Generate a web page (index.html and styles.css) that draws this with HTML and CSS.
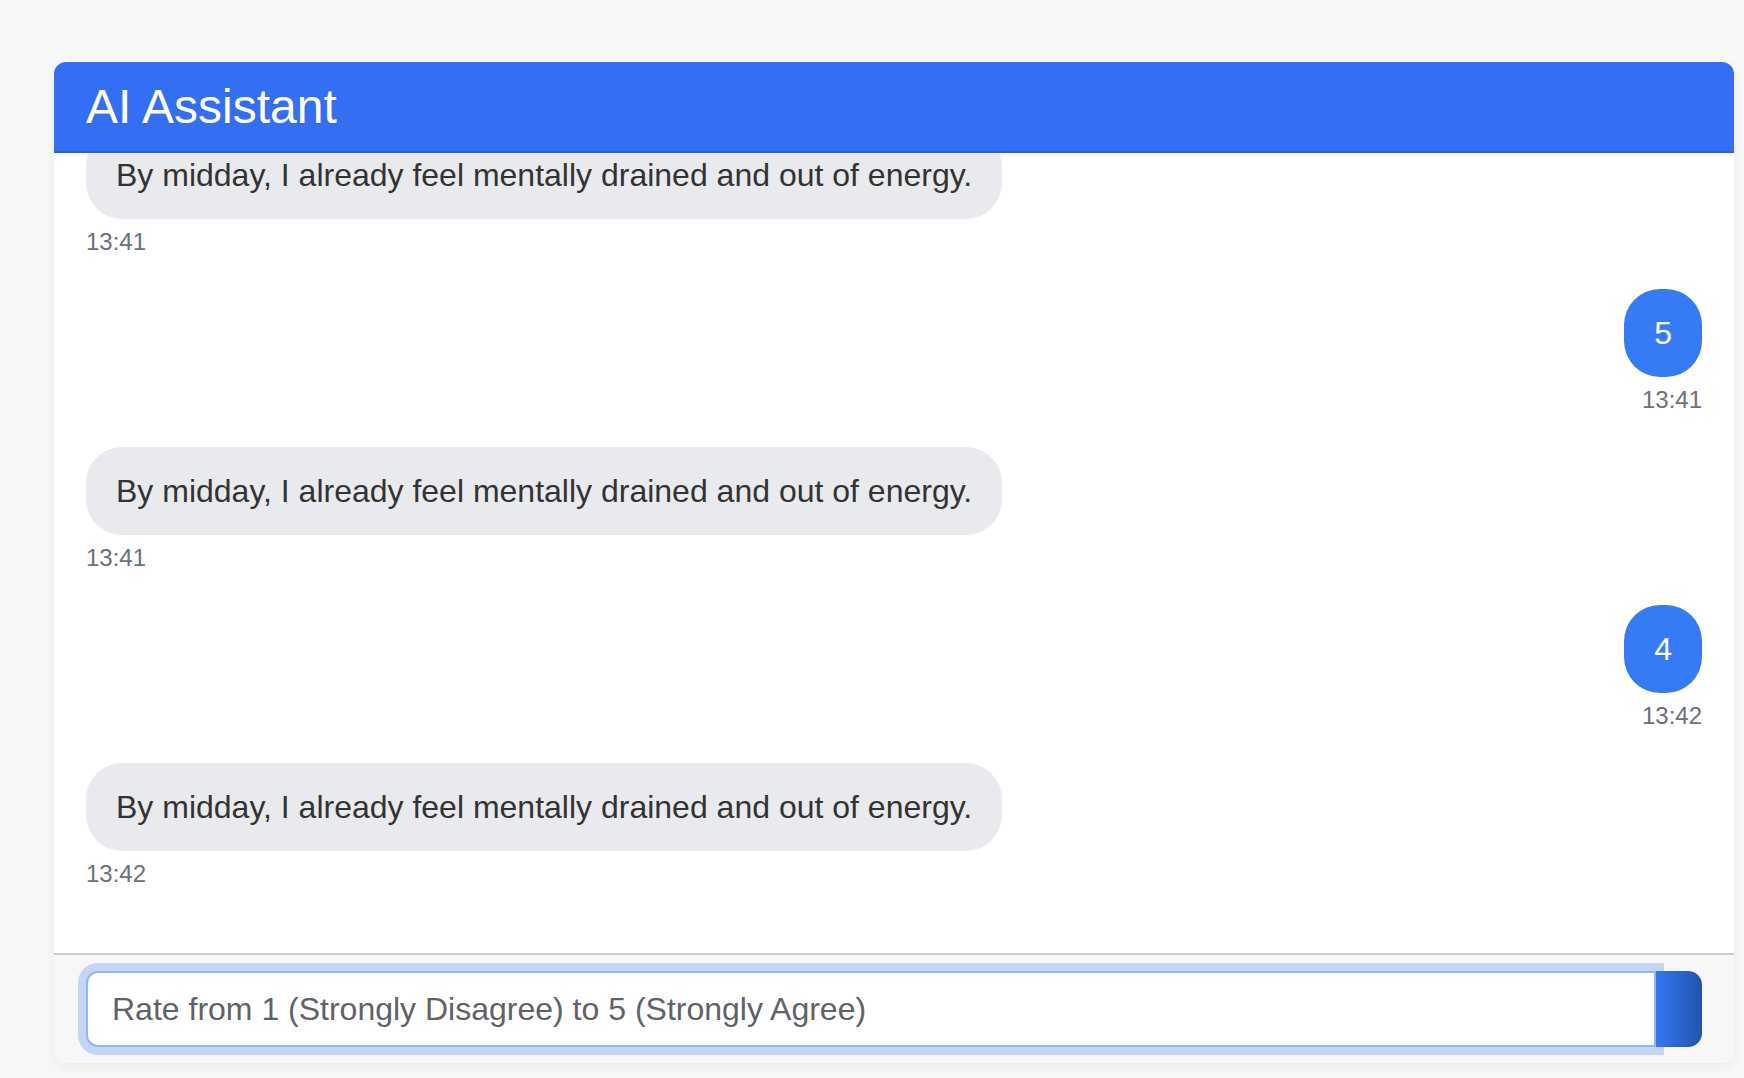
FILE: index.html
```html
<!DOCTYPE html>
<html>
<head>
    <title>AI Assistant</title>
    <link rel="stylesheet" href="styles.css">
</head>
<body>
    <div class="chat">
        <div class="chat-header">
            <h1>AI Assistant</h1>
        </div>
        <div class="chat-messages" id="messages">
            <div class="message bot">
                <div class="bubble">By midday, I already feel mentally drained and out of energy.</div>
                <div class="time">13:41</div>
            </div>
            <div class="message user">
                <div class="bubble">5</div>
                <div class="time">13:41</div>
            </div>
            <div class="message bot">
                <div class="bubble">By midday, I already feel mentally drained and out of energy.</div>
                <div class="time">13:41</div>
            </div>
            <div class="message user">
                <div class="bubble">4</div>
                <div class="time">13:42</div>
            </div>
            <div class="message bot">
                <div class="bubble">By midday, I already feel mentally drained and out of energy.</div>
                <div class="time">13:42</div>
            </div>
        </div>
        <div class="chat-input">
            <input type="text" id="answer" placeholder="Rate from 1 (Strongly Disagree) to 5 (Strongly Agree)">
            <button class="send"></button>
        </div>
    </div>
    <script>
        const messages = document.getElementById("messages");
        messages.scrollTop = messages.scrollHeight;
    </script>
</body>
</html>
```

FILE: styles.css
```css
body {
    margin: 0;
    padding: 62px 10px 15px 54px;
    background: #f7f8fa;
    font-family: "Liberation Sans", Arial, sans-serif;
}

.chat {
    width: 1680px;
    height: 1001px;
    display: flex;
    flex-direction: column;
    background: #fff;
    border-radius: 12px;
    overflow: hidden;
    box-shadow: 0 4px 14px rgba(0, 0, 0, 0.06);
}

.chat-header {
    flex: none;
    height: 89px;
    display: flex;
    align-items: center;
    padding: 0 32px;
    background: #346ef2;
    border-bottom: 2px solid #2b5fd6;
}

.chat-header h1 {
    margin: 0;
    font-size: 48px;
    font-weight: 400;
    color: #fff;
}

.chat-messages {
    flex: 1;
    overflow-y: auto;
    scrollbar-width: none;
    padding: 32px;
}

.message {
    display: flex;
    flex-direction: column;
    margin-bottom: 34px;
}

.message.bot {
    align-items: flex-start;
}

.message.user {
    align-items: flex-end;
}

.bubble {
    padding: 20px 30px;
    font-size: 32px;
    line-height: 48px;
    border-radius: 36px;
    max-width: 70%;
}

.bot .bubble {
    background: #e9eaee;
    color: #333;
}

.user .bubble {
    background: #377af5;
    color: #fff;
}

.time {
    margin-top: 10px;
    font-size: 24px;
    line-height: 26px;
    color: #6b7079;
}

.chat-input {
    flex: none;
    display: flex;
    padding: 16px 32px;
    background: #f7f7f7;
    border-top: 2px solid #cccccc;
}

.chat-input input {
    flex: 1;
    height: 76px;
    box-sizing: border-box;
    padding: 0 24px;
    font-family: "Liberation Sans", Arial, sans-serif;
    font-size: 32px;
    color: #333;
    background: #fff;
    border: 2px solid #8fb5f8;
    border-radius: 12px 0 0 12px;
    box-shadow: 0 0 0 8px #c5d5f5;
    outline: none;
}

.chat-input input::placeholder {
    color: #5f6266;
}

.send {
    width: 46px;
    height: 76px;
    border: none;
    border-radius: 0 14px 14px 0;
    background: linear-gradient(90deg, #3478f4, #2054ac);
    cursor: pointer;
}
```
